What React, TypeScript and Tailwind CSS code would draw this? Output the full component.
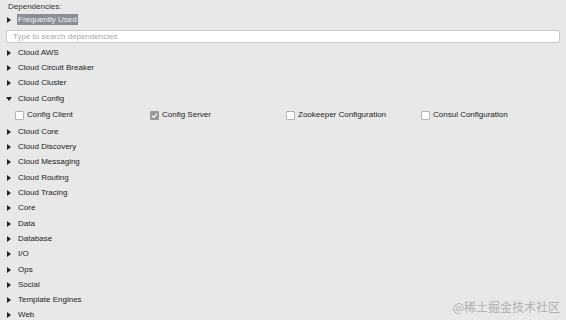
import React from 'react';

const GROUPS_BEFORE = ['Cloud AWS', 'Cloud Circuit Breaker', 'Cloud Cluster'];
const GROUPS_AFTER = [
  'Cloud Core',
  'Cloud Discovery',
  'Cloud Messaging',
  'Cloud Routing',
  'Cloud Tracing',
  'Core',
  'Data',
  'Database',
  'I/O',
  'Ops',
  'Social',
  'Template Engines',
  'Web',
];

const CONFIG_ITEMS = [
  { name: 'Config Client', checked: false },
  { name: 'Config Server', checked: true },
  { name: 'Zookeeper Configuration', checked: false },
  { name: 'Consul Configuration', checked: false },
];

function Arrow({ open }: { open?: boolean }) {
  return (
    <svg width="6" height="6" viewBox="0 0 6 6" className="shrink-0">
      {open ? <path d="M0 1 L6 1 L3 5 Z" fill="#222" /> : <path d="M1 0 L5 3 L1 6 Z" fill="#222" />}
    </svg>
  );
}

function Group({ name, open }: { name: string; open?: boolean }) {
  return (
    <div className="flex items-center h-[15.3px] pl-[6px] gap-[6px]">
      <Arrow open={open} />
      <span>{name}</span>
    </div>
  );
}

function Checkbox({ checked }: { checked: boolean }) {
  if (checked) {
    return (
      <span className="w-[9px] h-[9px] rounded-[1px] bg-[#9a9a9a] flex items-center justify-center shrink-0">
        <svg width="7" height="7" viewBox="0 0 6 6">
          <path d="M1 3.2 L2.5 4.6 L5 1.4" stroke="#fff" strokeWidth="1" fill="none" />
        </svg>
      </span>
    );
  }
  return <span className="w-[9px] h-[9px] rounded-[1px] border border-[#b5b5b5] bg-white shrink-0" />;
}

export default function App() {
  return (
    <div
      className="w-[566px] h-[320px] bg-[#e8e8e8] text-[8px] text-[#222] overflow-hidden relative"
      style={{ fontFamily: '"Liberation Sans", Arial, sans-serif' }}
    >
      <div className="pt-[1px] pl-[8px] h-[12px] leading-[12px] text-[#333]">Dependencies:</div>
      <div className="flex items-center h-[15px] pl-[6px] gap-[5px]">
        <Arrow />
        <span className="bg-[#8a8e96] text-[#f2f2f2] px-[1px] leading-[11px]">Frequently Used</span>
      </div>
      <div className="mx-[6px] mt-[3px] mb-[2px] h-[13px] bg-white border border-[#c8c8c8] rounded-[2px] flex items-center pl-[6px] text-[#a8a8a8]">
        Type to search dependencies
      </div>
      {GROUPS_BEFORE.map((g) => (
        <Group key={g} name={g} />
      ))}
      <Group name="Cloud Config" open />
      <div className="grid grid-cols-[135px_136px_135px_135px] pl-[15px] h-[18px] items-center">
        {CONFIG_ITEMS.map((c) => (
          <div key={c.name} className="flex items-center gap-[3px]">
            <Checkbox checked={c.checked} />
            <span>{c.name}</span>
          </div>
        ))}
      </div>
      {GROUPS_AFTER.map((g) => (
        <Group key={g} name={g} />
      ))}
      <div
        className="absolute right-[6px] bottom-[4px] text-[12px] text-[#b0b0b0]"
        style={{ fontFamily: '"Noto Sans CJK SC", sans-serif' }}
      >
        @稀土掘金技术社区
      </div>
    </div>
  );
}
